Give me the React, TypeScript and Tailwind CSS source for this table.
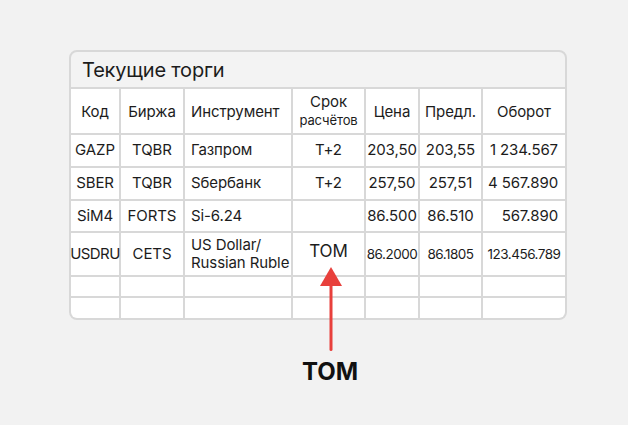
const rows = [
  { code: 'GAZP', ex: 'TQBR', inst: 'Газпром', term: 'T+2', price: '203,50', offer: '203,55', turnover: '1 234.567', h: 'h-[31px]' },
  { code: 'SBER', ex: 'TQBR', inst: 'Sбербанк', term: 'T+2', price: '257,50', offer: '257,51', turnover: '4 567.890', h: 'h-[31px]' },
  { code: 'SiM4', ex: 'FORTS', inst: 'Si-6.24', term: '', price: '86.500', offer: '86.510', turnover: '567.890', h: 'h-[30px]' },
];

function Cell({ children, className = '' }: { children?: React.ReactNode; className?: string }) {
  return <div className={`bg-white flex items-center whitespace-nowrap ${className}`}>{children}</div>;
}

export default function App() {
  return (
    <div className="w-[628px] h-[425px] bg-[#f2f2f2] text-[#1c1c1c] relative" style={{ fontFamily: 'Inter, "Noto Sans", sans-serif' }}>
      <div className="pt-[50px] pl-[69px]">
        <div className="w-[498px] border-2 border-[#d8d8d8] rounded-[8px] overflow-hidden bg-[#d8d8d8]">
          <div className="h-[35px] bg-[#f3f3f3] flex items-center pl-[11px] text-[20px] tracking-[-0.2px]">
            Текущие торги
          </div>
          <div className="grid grid-cols-[48px_62px_106px_71px_52px_61px_82px] gap-[2px] pt-[2px] text-[15px] tracking-[-0.1px]">
            {/* header */}
            <Cell className="h-[44px] justify-center pt-[2px]">Код</Cell>
            <Cell className="justify-center pt-[2px]">Биржа</Cell>
            <Cell className="pl-[6px] pt-[2px]">Инструмент</Cell>
            <Cell className="flex-col justify-center leading-[18px]">
              <span className="text-[15px]">Срок</span>
              <span className="text-[13px]">расчётов</span>
            </Cell>
            <Cell className="justify-center pt-[2px]">Цена</Cell>
            <Cell className="justify-center pt-[2px]">Предл.</Cell>
            <Cell className="justify-center pt-[2px]">Оборот</Cell>

            {rows.map((r) => (
              <>
                <Cell key={r.code} className={`${r.h} justify-center`}>{r.code}</Cell>
                <Cell className="justify-center">{r.ex}</Cell>
                <Cell className="pl-[6px]">{r.inst}</Cell>
                <Cell className="justify-center">{r.term}</Cell>
                <Cell className="justify-center">{r.price}</Cell>
                <Cell className="justify-center">{r.offer}</Cell>
                <Cell className="justify-end pr-[7px]">{r.turnover}</Cell>
              </>
            ))}

            <Cell className="h-[42px] justify-center tracking-[-0.6px]">USDRU</Cell>
            <Cell className="justify-center">CETS</Cell>
            <Cell className="pl-[6px] leading-[18px]">US Dollar/<br />Russian Ruble</Cell>
            <Cell className="justify-center text-[17px] pb-[4px]">TOM</Cell>
            <Cell className="justify-center text-[13.5px] tracking-[-0.5px]">86.2000</Cell>
            <Cell className="justify-center text-[13.5px] tracking-[-0.5px]">86.1805</Cell>
            <Cell className="justify-center text-[13.5px] tracking-[-0.5px]">123.456.789</Cell>

            {[0, 1].map((i) =>
              [0, 1, 2, 3, 4, 5, 6].map((j) => (
                <Cell key={`${i}-${j}`} className={i === 0 ? 'h-[19px]' : 'h-[20px]'} />
              ))
            )}
          </div>
        </div>
      </div>

      <svg className="absolute left-[318px] top-[266px]" width="26" height="86" viewBox="0 0 26 86">
        <polygon points="13,1 2,20 24,20" fill="#e8403c" />
        <rect x="11.5" y="16" width="3" height="69" rx="1.5" fill="#e8403c" />
      </svg>

      <div className="absolute left-[290px] top-[354px] w-[80px] text-center text-[24px] font-bold text-[#111]">TOM</div>
    </div>
  );
}
